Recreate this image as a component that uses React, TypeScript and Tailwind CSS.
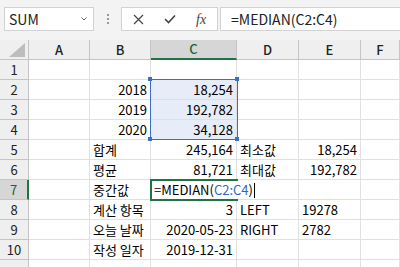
import React from "react";

type Cell = { t?: string; right?: boolean };

const R = (t: string): Cell => ({ t, right: true });
const L = (t: string): Cell => ({ t });
const E: Cell = {};

const cols = ["A", "B", "C", "D", "E", "F"];

const rows: Cell[][] = [
  [E, E, E, E, E, E],
  [E, R("2018"), R("18,254"), E, E, E],
  [E, R("2019"), R("192,782"), E, E, E],
  [E, R("2020"), R("34,128"), E, E, E],
  [E, L("합계"), R("245,164"), L("최소값"), R("18,254"), E],
  [E, L("평균"), R("81,721"), L("최대값"), R("192,782"), E],
  [E, L("중간값"), E, E, E, E],
  [E, L("계산 항목"), R("3"), L("LEFT"), L("19278"), E],
  [E, L("오늘 날짜"), R("2020-05-23"), L("RIGHT"), L("2782"), E],
  [E, L("작성 일자"), R("2019-12-31"), E, E, E],
  [E, E, E, E, E, E],
];

function FormulaBar() {
  return (
    <div className="flex h-[40px] items-start bg-[#f3f3f3] pt-[7px]">
      <div className="ml-[4px] flex h-[24px] w-[90px] items-center justify-between border border-[#d2d2d2] bg-white pl-[4px] pr-[6px] text-[14px] text-[#222]">
        <span>SUM</span>
        <svg width="6" height="4" viewBox="0 0 6 4">
          <path d="M0.5 0.5 L3 3 L5.5 0.5" fill="none" stroke="#666" strokeWidth="1" />
        </svg>
      </div>
      <div className="flex h-[24px] w-[27px] flex-col items-center justify-center gap-[2px]">
        <span className="h-[2px] w-[2px] bg-[#999]" />
        <span className="h-[2px] w-[2px] bg-[#999]" />
        <span className="h-[2px] w-[2px] bg-[#999]" />
      </div>
      <div className="flex h-[24px] w-[97px] items-center border border-[#d2d2d2] bg-white">
        <div className="flex w-[32px] justify-center pl-[2px]">
          <svg width="11" height="11" viewBox="0 0 11 11">
            <path d="M1 1 L10 10 M10 1 L1 10" stroke="#444" strokeWidth="1.2" />
          </svg>
        </div>
        <div className="flex w-[32px] justify-center">
          <svg width="12" height="10" viewBox="0 0 12 10">
            <path d="M1 5 L4.5 8.5 L11 1.5" fill="none" stroke="#444" strokeWidth="1.6" />
          </svg>
        </div>
        <div className="flex w-[32px] justify-center font-['Liberation_Serif',serif] text-[14px] italic text-[#444]">
          fx
        </div>
      </div>
      <div className="ml-[2px] flex h-[24px] flex-1 items-center border border-r-0 border-[#d2d2d2] bg-white pl-[10px] text-[14px] text-[#222]">
        =MEDIAN(C2:C4)
      </div>
    </div>
  );
}

function Sheet() {
  return (
    <div className="relative">
      <div className="grid grid-cols-[29px_61px_61px_86px_62px_62px_1fr]">
        <div className="relative h-[20px] border-b border-r border-[#c4c4c4] bg-[#efefef]">
          <svg className="absolute bottom-[2px] right-[3px]" width="16" height="14" viewBox="0 0 16 14">
            <path d="M16 0 L16 14 L0 14 Z" fill="#bdbdbd" />
          </svg>
        </div>
        {cols.map((c) =>
          c === "C" ? (
            <div
              key={c}
              className="flex h-[20px] items-center justify-center border-b-2 border-r border-b-[#217346] border-r-[#c4c4c4] bg-[#d6d6d6] text-[13px] font-medium text-[#1e5e38]"
            >
              {c}
            </div>
          ) : (
            <div
              key={c}
              className="flex h-[20px] items-center justify-center border-b border-r border-[#c4c4c4] bg-[#efefef] text-[13px] font-medium text-[#222]"
            >
              {c}
            </div>
          )
        )}
        {rows.map((row, i) => (
          <React.Fragment key={i}>
            {i === 6 ? (
              <div className="flex h-[20px] items-center justify-center border-b border-r-2 border-b-[#c4c4c4] border-r-[#217346] bg-[#d6d6d6] text-[13px] text-[#1e5e38]">
                {i + 1}
              </div>
            ) : (
              <div className="flex h-[20px] items-center justify-center border-b border-r border-[#c4c4c4] bg-[#efefef] text-[13px] text-[#222]">
                {i < 10 ? i + 1 : ""}
              </div>
            )}
            {row.map((cell, j) => {
              const sel = j === 2 && i >= 1 && i <= 3;
              return (
                <div
                  key={j}
                  className={
                    "h-[20px] overflow-visible whitespace-nowrap border-b border-r border-[#e0e0e0] px-[3px] pt-[1px] text-[13px] leading-[18px] text-black " +
                    (cell.right ? "text-right " : "text-left ") +
                    (sel ? "bg-[#e6edf8]" : "bg-white")
                  }
                >
                  {cell.t}
                </div>
              );
            })}
          </React.Fragment>
        ))}
      </div>

      {/* formula reference range C2:C4 */}
      <div className="absolute left-[150px] top-[39px] h-[61px] w-[88px] border-[1.5px] border-[#3a6fc4]" />
      <span className="absolute left-[148px] top-[37px] h-[4px] w-[4px] bg-[#3a6fc4]" />
      <span className="absolute left-[235px] top-[37px] h-[4px] w-[4px] bg-[#3a6fc4]" />
      <span className="absolute left-[148px] top-[97px] h-[4px] w-[4px] bg-[#3a6fc4]" />
      <span className="absolute left-[235px] top-[97px] h-[4px] w-[4px] bg-[#3a6fc4]" />

      {/* active cell C7 in edit mode */}
      <div className="absolute left-[150px] top-[139px] h-[22px] w-[88px] border-2 border-[#217346]" />
      <div className="absolute left-[152px] top-[141px] flex h-[18px] items-center whitespace-nowrap bg-white pl-[2px] pr-[2px] text-[13px] text-black">
        <span>=MEDIAN(</span>
        <span className="text-[#2f67c0]">C2:C4</span>
        <span>)</span>
        <span className="ml-[1px] h-[15px] w-[1px] bg-black" />
      </div>
    </div>
  );
}

export default function App() {
  return (
    <div className="h-[267px] w-[400px] overflow-hidden bg-white font-['Noto_Sans_CJK_KR','Liberation_Sans',sans-serif]">
      <FormulaBar />
      <Sheet />
    </div>
  );
}
